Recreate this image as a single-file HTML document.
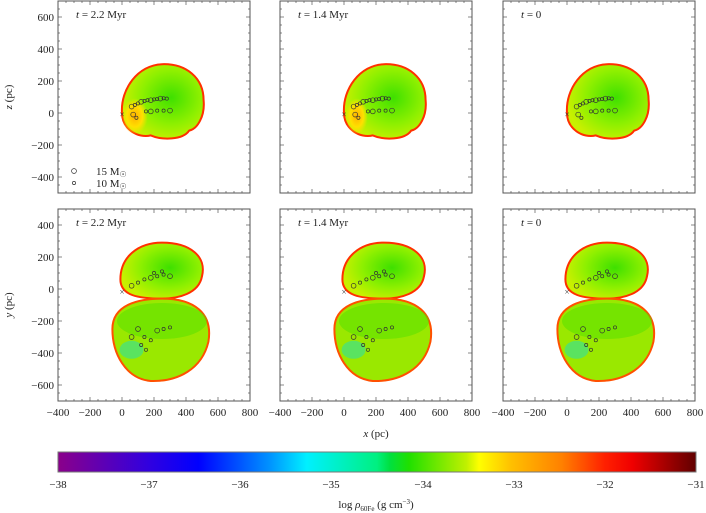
<!DOCTYPE html>
<html><head><meta charset="utf-8"><style>
html,body{margin:0;padding:0;background:#fff;width:706px;height:513px;overflow:hidden}
svg{display:block;font-family:"Liberation Serif",serif}
</style></head><body>
<svg id="s" width="706" height="513" viewBox="0 0 706 513" xmlns="http://www.w3.org/2000/svg">
<defs>
<radialGradient id="g1" cx="0.6" cy="0.45" r="0.6"><stop offset="0" stop-color="#3ee000"/><stop offset="0.6" stop-color="#8ef000"/><stop offset="1" stop-color="#c8f000"/></radialGradient>
<radialGradient id="g2" cx="0.5" cy="0.5" r="0.5"><stop offset="0" stop-color="#ffb000"/><stop offset="0.6" stop-color="#ffe000"/><stop offset="1" stop-color="#ffe000" stop-opacity="0"/></radialGradient>
<linearGradient id="cb" x1="0" x2="1" y1="0" y2="0">
<stop offset="0" stop-color="#8a008a"/><stop offset="0.143" stop-color="#3000e0"/><stop offset="0.22" stop-color="#0000ff"/><stop offset="0.33" stop-color="#0090ff"/><stop offset="0.39" stop-color="#00f0ff"/><stop offset="0.5" stop-color="#00f080"/><stop offset="0.52" stop-color="#00e040"/><stop offset="0.55" stop-color="#20e000"/><stop offset="0.64" stop-color="#c0f000"/><stop offset="0.66" stop-color="#ffff00"/><stop offset="0.71" stop-color="#ffc000"/><stop offset="0.79" stop-color="#ff8000"/><stop offset="0.857" stop-color="#ff2000"/><stop offset="0.9" stop-color="#f00000"/><stop offset="1" stop-color="#600000"/>
</linearGradient>
</defs>
<g id="root"></g>
<rect x="58" y="452" width="638" height="20" fill="url(#cb)" stroke="#777" stroke-width="1"/>
<g font-size="11" text-anchor="middle" fill="#222">
<text x="58" y="488">−38</text><text x="149" y="488">−37</text><text x="240" y="488">−36</text><text x="331" y="488">−35</text><text x="423" y="488">−34</text><text x="514" y="488">−33</text><text x="605" y="488">−32</text><text x="696" y="488">−31</text>
<text x="376" y="508">log <tspan font-style="italic">ρ</tspan><tspan font-size="7" dy="3">60Fe</tspan><tspan dy="-3"> (g cm</tspan><tspan font-size="7" dy="-4">−3</tspan><tspan dy="4">)</tspan></text>
<text x="376" y="437"><tspan font-style="italic">x</tspan> (pc)</text>
<text transform="translate(12,97) rotate(-90)"><tspan font-style="italic">z</tspan> (pc)</text>
<text transform="translate(12,305) rotate(-90)"><tspan font-style="italic">y</tspan> (pc)</text>
</g>
</svg>
<script>
const NS="http://www.w3.org/2000/svg",root=document.getElementById('root');
function el(t,a,p){const e=document.createElementNS(NS,t);for(const k in a)e.setAttribute(k,a[k]);(p||root).appendChild(e);return e}
function txt(s,a,p){const e=el('text',a,p);e.textContent=s;return e}
const xs=[58,280,503],W=192,H=192;
const labels=['2.2 Myr','1.4 Myr','0'];
function P(pts,sx,sy){let d='M'+sx(pts[0][0])+','+sy(pts[0][1]);for(let i=1;i<pts.length;i+=3){d+=' C'+[0,1,2].map(k=>sx(pts[i+k][0])+','+sy(pts[i+k][1])).join(' ');}return d+'Z'}
for(let r=0;r<2;r++)for(let c=0;c<3;c++){
 const X=xs[c],Y=r?209:1;
 const g=el('g',{transform:`translate(${X},${Y})`});
 const sx=v=>(v+400)*0.16, sy=r?v=>(500-v)*0.16:v=>(700-v)*0.16;
 if(r==0){
  el('path',{d:P([[0,0],[-10,150],[100,300],[250,305],[400,310],[510,220],[510,80],[520,-20],[470,-100],[420,-110],[380,-170],[250,-170],[180,-140],[100,-160],[0,-100],[0,0]],sx,sy),fill:'url(#g1)',stroke:'#ff3000','stroke-width':2},g);
  if(c<2)el('ellipse',{cx:sx(80),cy:sy(-20),rx:c?11:13,ry:18,fill:'url(#g2)'},g);
 }else{
  el('path',{d:P([[-10,60],[-10,200],[100,290],[250,290],[430,290],[530,200],[500,80],[480,-30],[350,-60],[250,-60],[100,-60],[-10,-40],[-10,60]],sx,sy),fill:'url(#g1)',stroke:'#ff3000','stroke-width':2},g);
  el('path',{d:P([[-60,-250],[-60,-100],[100,-60],[250,-60],[450,-60],[570,-150],[540,-330],[500,-500],[350,-580],[180,-575],[20,-560],[-60,-400],[-60,-250]],sx,sy),fill:'#9ae800',stroke:'#ff5000','stroke-width':2},g);
  el('ellipse',{cx:sx(60),cy:sy(-380),rx:12,ry:9,fill:'#30e0a0',opacity:0.6},g);
  el('ellipse',{cx:sx(250),cy:sy(-200),rx:45,ry:18,fill:'#50e000',opacity:0.5},g);
 }
 const pts=r==0?[[60,40],[80,50],[100,60],[120,70],[140,75],[160,80],[180,80],[200,85],[220,88],[240,90],[260,92],[280,90],[70,-10],[90,-30],[150,10],[180,10],[220,15],[260,15],[300,15]]:[[60,20],[100,40],[140,60],[180,70],[220,80],[260,90],[300,80],[200,100],[250,110],[100,-250],[140,-300],[180,-320],[220,-260],[260,-250],[300,-240],[60,-300],[120,-350],[150,-380]];
 pts.forEach((p,i)=>el('circle',{cx:sx(p[0]),cy:sy(p[1]),r:i%3?1.6:2.4,fill:'none',stroke:'#333','stroke-width':0.7},g));
 txt('×',{x:sx(0),y:sy(r?-20:-10)+3,'font-size':9,'text-anchor':'middle',fill:'#333'},g);
 el('rect',{x:0,y:0,width:W,height:H,fill:'none',stroke:'#555','stroke-width':1},g);
 for(let v=-400;v<=800;v+=50){const x=sx(v),L=v%200==0?4:2;el('line',{x1:x,x2:x,y1:H,y2:H-L,stroke:'#555','stroke-width':0.7},g);el('line',{x1:x,x2:x,y1:0,y2:L,stroke:'#555','stroke-width':0.7},g);}
 const y0=r?-700:-500,y1=r?500:700;
 for(let v=y0;v<=y1;v+=50){const y=sy(v),L=v%200==0?4:2;el('line',{x1:0,x2:L,y1:y,y2:y,stroke:'#555','stroke-width':0.7},g);el('line',{x1:W,x2:W-L,y1:y,y2:y,stroke:'#555','stroke-width':0.7},g);}
 const t=txt('',{x:18,y:17,'font-size':11,fill:'#222'},g);
 t.innerHTML='<tspan font-style="italic">t</tspan> = '+labels[c];
 if(c==0){const ys=r?[400,200,0,-200,-400,-600]:[600,400,200,0,-200,-400];
  ys.forEach(v=>txt(v<0?'−'+(-v):''+v,{x:-4,y:sy(v)+4,'font-size':11,'text-anchor':'end',fill:'#222'},g));}
 if(r==1)[-400,-200,0,200,400,600,800].forEach(v=>txt(v<0?'−'+(-v):''+v,{x:sx(v),y:H+15,'font-size':11,'text-anchor':'middle',fill:'#222'},g));
 if(r==0&&c==0){el('circle',{cx:16,cy:170,r:2.4,fill:'none',stroke:'#333','stroke-width':0.7},g);el('circle',{cx:16,cy:182,r:1.6,fill:'none',stroke:'#333','stroke-width':0.7},g);
  const a=txt('',{x:38,y:174,'font-size':11,fill:'#222'},g);a.innerHTML='15 M<tspan font-size="8" dy="2">☉</tspan>';
  const b=txt('',{x:38,y:186,'font-size':11,fill:'#222'},g);b.innerHTML='10 M<tspan font-size="8" dy="2">☉</tspan>';}
}
</script>
</body></html>
